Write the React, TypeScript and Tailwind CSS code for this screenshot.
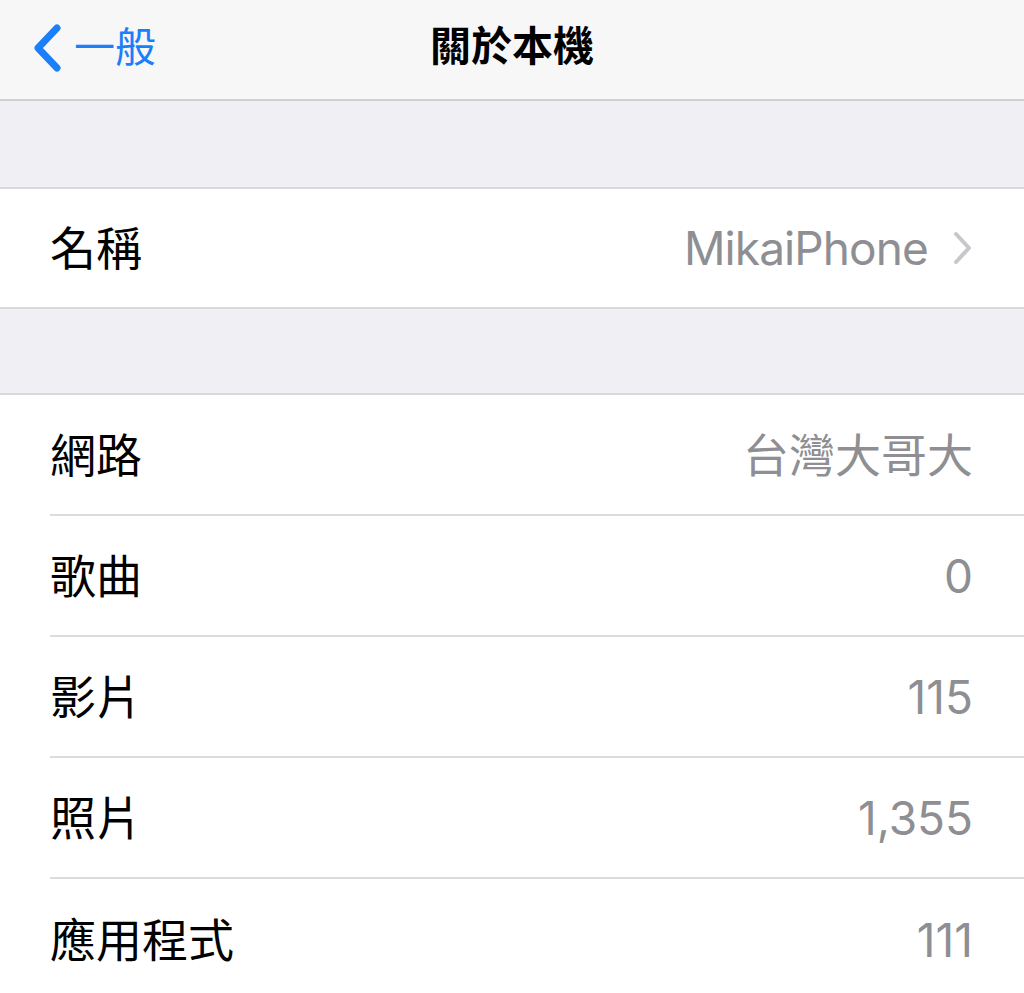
const cjk = "font-['Inter','Noto_Sans_CJK_TC',sans-serif]";

type Row = { label: string; value: string };

const rows: Row[] = [
  { label: "網路", value: "台灣大哥大" },
  { label: "歌曲", value: "0" },
  { label: "影片", value: "115" },
  { label: "照片", value: "1,355" },
  { label: "應用程式", value: "111" },
];

function Chevron() {
  return (
    <svg width="22" height="36" viewBox="0 0 22 36" className="ml-[24px]">
      <path d="M4 4 L17 18 L4 32" fill="none" stroke="#c7c7cc" strokeWidth="4" strokeLinecap="round" strokeLinejoin="round" />
    </svg>
  );
}

export default function App() {
  return (
    <div className={`min-h-[993px] w-[1024px] overflow-hidden bg-[#efeff4] ${cjk}`}>
      {/* nav bar */}
      <div className="relative flex h-[101px] items-center justify-center border-b-2 border-[#cfced3] bg-[#f7f7f8]">
        <div className="absolute left-[30px] top-0 flex h-full items-center pb-[4px] text-[#1a7ff9]">
          <svg width="36" height="50" viewBox="0 0 36 50">
            <path d="M27 5 L8 25 L27 45" fill="none" stroke="#1a7ff9" strokeWidth="7" strokeLinecap="round" strokeLinejoin="round" />
          </svg>
          <span className="ml-[8px] text-[41px] leading-none">一般</span>
        </div>
        <span className="pb-[6px] text-[41px] font-semibold leading-none text-black">關於本機</span>
      </div>

      <div className="h-[86px]" />

      <div className="border-y-2 border-[#d9d8dd] bg-white">
        <div className="flex h-[118px] items-center pl-[50px] pr-[50px]">
          <span className="text-[46px] leading-none text-black">名稱</span>
          <span className="ml-auto text-[46px] leading-none tracking-[-0.9px] text-[#8e8e93]">MikaiPhone</span>
          <Chevron />
        </div>
      </div>

      <div className="h-[84px]" />

      <div className="border-t-2 border-[#d9d8dd] bg-white">
        {rows.map((r, i) => (
          <div key={r.label} className="pl-[50px]">
            <div
              className={`flex h-[121px] items-center pr-[51px] ${
                i < rows.length - 1 ? "border-b-2 border-[#dcdbe0]" : ""
              }`}
            >
              <span className="text-[46px] leading-none text-black">{r.label}</span>
              <span className="ml-auto text-[46px] leading-none text-[#8e8e93]">{r.value}</span>
            </div>
          </div>
        ))}
      </div>
    </div>
  );
}
